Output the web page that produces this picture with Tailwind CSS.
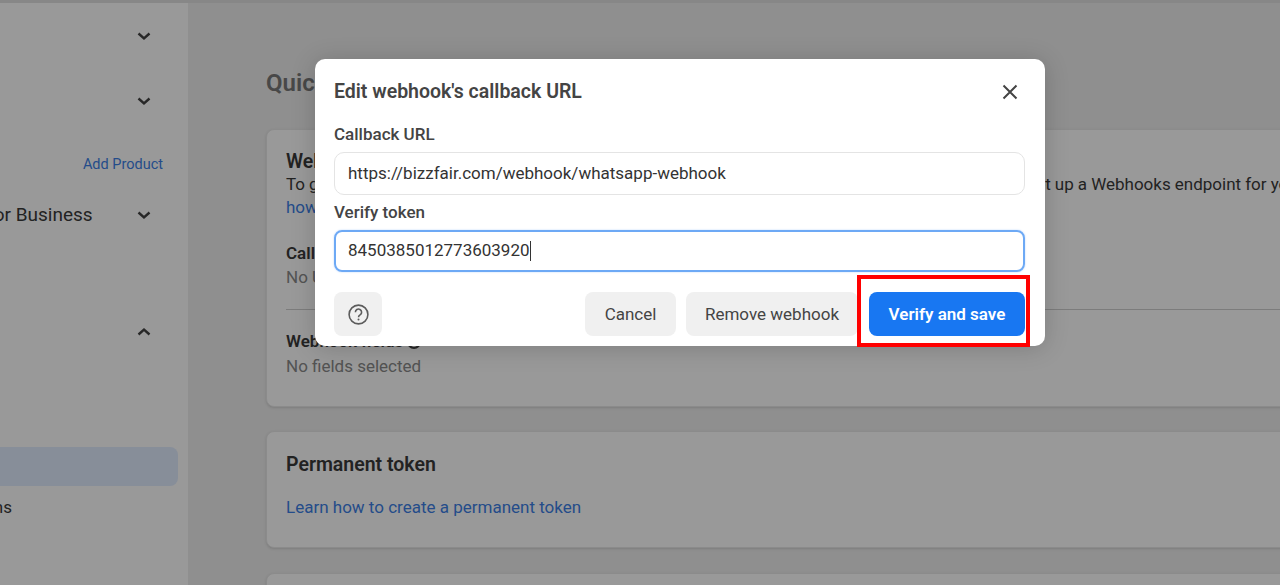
<!DOCTYPE html>
<html lang="en">
<head>
<meta charset="utf-8">
<title>Edit webhook</title>
<script src="https://cdn.jsdelivr.net/npm/@tailwindcss/browser@4"></script>
</head>
<body class="h-[585px] w-[1280px] overflow-hidden bg-[#eeeeee] font-['Roboto',sans-serif] text-[#3a3a3a]">
<div class="relative h-[585px] w-[1280px] overflow-hidden">
  <header class="h-[3px] bg-[#e1e1e1]"></header>
  <div class="flex h-[582px]">
    <aside class="w-[188px] shrink-0 overflow-hidden bg-white">
      <div class="flex h-[65px] items-center justify-end pr-[36px]">
        <svg class="h-4 w-4" viewBox="0 0 16 16" fill="none" stroke="#444444" stroke-width="2.4"><path d="M2.5 5.5 8 10.5l5.5-5"/></svg>
      </div>
      <div class="flex h-[65px] items-center justify-end pr-[36px]">
        <svg class="h-4 w-4" viewBox="0 0 16 16" fill="none" stroke="#444444" stroke-width="2.4"><path d="M2.5 5.5 8 10.5l5.5-5"/></svg>
      </div>
      <div class="mt-[16px] flex h-[30px] items-center justify-end pt-[2px] pr-[25px] text-[14.5px] text-[#3d7fe6]">Add Product</div>
      <div class="flex h-[72px] items-center justify-between pr-[36px]">
        <span class="ml-[-105px] text-[19px] leading-6 whitespace-nowrap">WhatsApp for Business</span>
        <svg class="h-4 w-4 shrink-0" viewBox="0 0 16 16" fill="none" stroke="#444444" stroke-width="2.4"><path d="M2.5 5.5 8 10.5l5.5-5"/></svg>
      </div>
      <div class="flex h-[92px] items-end justify-end pr-[36px] pb-[3px]">
        <svg class="h-4 w-4" viewBox="0 0 16 16" fill="none" stroke="#444444" stroke-width="2.4"><path d="M2.5 10.5 8 5.5l5.5 5"/></svg>
      </div>
      <div class="mt-[104px] mr-[10px] h-[39px] rounded-r-lg bg-[#e1edff]"></div>
      <div class="mt-[11px] flex h-[21px] items-center justify-end pr-[176px] text-[17px] whitespace-nowrap">Configurations</div>
    </aside>
    <main class="min-w-0 flex-1 overflow-hidden pl-[78px]">
      <h1 class="mt-[66px] text-2xl leading-7 font-semibold whitespace-nowrap text-[#787878]">Quickstart</h1>
      <section class="mt-[32px] h-[278px] w-[1100px] rounded-lg border border-[#e8e8e8] bg-white px-[19px] pt-[21px] shadow-sm">
        <h2 class="text-[19.5px] leading-[22px] font-semibold">Webhook</h2>
        <p class="text-[17px] leading-[23px] whitespace-nowrap [word-spacing:-0.13px]">To get alerted when you receive a message or when the status of a message changes, you need to set up a Webhooks endpoint for your app.</p>
        <a class="block text-[17px] leading-[23px] text-[#3d7fe6]">how</a>
        <h3 class="mt-[23px] text-[17px] leading-[23px] font-semibold">Callback URL</h3>
        <p class="text-[17px] leading-[24px] text-[#8a8a8a]">No URL</p>
        <hr class="mt-[20px] border-[#cfcfcf]">
        <h3 class="mt-[20px] flex items-center gap-1 text-[17px] leading-[23px] font-semibold">Webhook fields <span class="inline-block h-[14px] w-[14px] rounded-full border-2 border-[#444444]"></span></h3>
        <p class="text-[17px] leading-[27px] text-[#8a8a8a]">No fields selected</p>
      </section>
      <section class="mt-[24px] h-[117px] w-[1100px] rounded-lg border border-[#e8e8e8] bg-white px-[19px] pt-[20px] shadow-sm">
        <h2 class="text-[19.5px] leading-[26px] font-semibold">Permanent token</h2>
        <a class="mt-[18px] block text-[17px] leading-[23px] text-[#3d7fe6]">Learn how to create a permanent token</a>
      </section>
      <section class="mt-[25px] h-[60px] w-[1100px] rounded-lg border border-[#e8e8e8] bg-white shadow-sm"></section>
    </main>
  </div>

  <div class="absolute inset-0 bg-black/40"></div>

  <div role="dialog" class="absolute top-[59px] left-[315px] h-[287px] w-[730px] rounded-[10px] bg-white pt-[21px] pr-[20px] pl-[19px] text-[#444444] shadow-[0_2px_24px_rgba(0,0,0,0.18)]">
    <div class="flex h-[24px] items-center justify-between">
      <h2 class="text-[19.5px] leading-6 font-semibold">Edit webhook's callback URL</h2>
      <svg class="mr-[7px] h-4 w-4" viewBox="0 0 16 16" fill="none" stroke="#444444" stroke-width="2"><path d="M1.5 1.5l13 13M14.5 1.5l-13 13"/></svg>
    </div>
    <label class="mt-[18px] block text-[17px] leading-[24px] font-medium">Callback URL</label>
    <div class="mt-[6px] flex h-[43px] items-center rounded-[10px] border border-[#e4e4e4] px-[13px] text-[17px] text-[#333333]">https://bizzfair.com/webhook/whatsapp-webhook</div>
    <label class="mt-[5px] block text-[17px] leading-[24px] font-medium">Verify token</label>
    <div class="mt-[6px] flex h-[42px] items-center rounded-[8px] border-2 border-[#6da9f5] px-[12px] text-[17px] text-[#333333] shadow-[0_0_2px_#b8d4fb]">8450385012773603920<span class="h-[20px] w-px bg-[#333333]"></span></div>
    <div class="mt-[20px] flex h-[44px] items-center gap-[10px]">
      <button class="mr-auto flex h-[44px] w-[48px] items-center justify-center rounded-[8px] bg-[#f0f0f0]">
        <svg class="h-[21px] w-[21px]" viewBox="0 0 21 21" fill="none" stroke="#5c5c5c" stroke-width="1.6"><circle cx="10.5" cy="10.5" r="9.4"/><path d="M7.4 8.2a3.1 3.1 0 1 1 4.9 2.5c-1.2.8-1.8 1.3-1.8 2.6"/><circle cx="10.5" cy="15.6" r="1" fill="#5c5c5c" stroke="none"/></svg>
      </button>
      <button class="h-[44px] w-[91px] rounded-[8px] bg-[#f0f0f0] pt-[1px] text-[17px]">Cancel</button>
      <button class="mr-[1px] h-[44px] w-[172px] rounded-[8px] bg-[#f0f0f0] pt-[1px] text-[17px]">Remove webhook</button>
      <button class="h-[44px] w-[156px] rounded-[8px] bg-[#1877f2] pt-[1px] text-[17px] font-semibold text-white">Verify and save</button>
    </div>
  </div>

  <div class="absolute top-[275px] left-[857px] h-[72px] w-[173px] border-[4px] border-[#ff0000]"></div>
</div>
</body>
</html>
